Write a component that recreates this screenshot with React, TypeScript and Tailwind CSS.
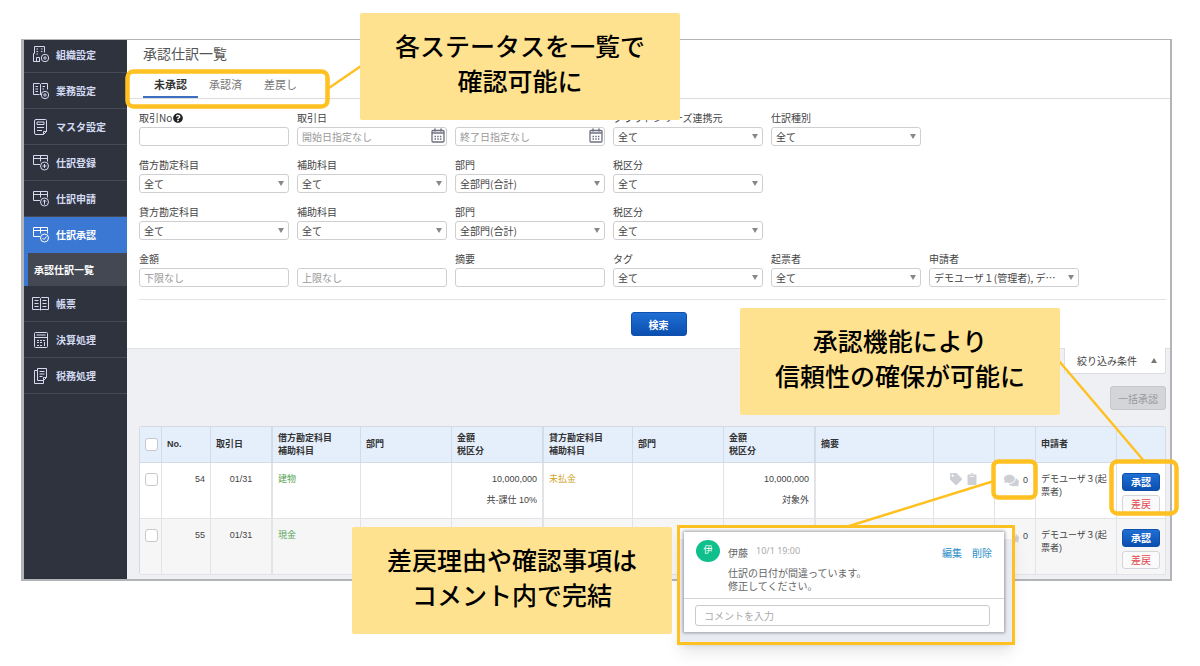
import type { ReactNode } from "react";
import { clsx } from "clsx";
import { FaClipboard, FaComments, FaQuestionCircle, FaTag } from "react-icons/fa";

const FONT = "font-['Noto_Sans_CJK_JP','Noto_Sans',sans-serif]";
const FIELD = "h-[19px] w-full rounded-[3px] border border-[#cfcfd2] bg-white px-1 py-0 text-[10px] leading-[17px] text-[#444]";

type IconName = "building" | "ledger" | "notebook" | "add" | "request" | "approve" | "book" | "calculator" | "documents";

const TABLE_SHAPE = <path d="M8 10.5H1.5v-9h14v6M1.5 4.5h14M8.5 1.5v6" />;
const BADGE_SHAPE = <circle cx="12.5" cy="12" r="4" />;
const GEAR_SHAPE = (
  <>
    <circle cx="13" cy="13" r="3.7" />
    <circle cx="13" cy="13" r="1.2" />
  </>
);

const ICONS: Record<IconName, ReactNode> = {
  building: (
    <>
      <path d="M8 16.5H1.5v-8h1v-7h10v6" />
      <path d="M4.500 4H6M9 4h1.500M4.500 6.500H6M9 6.500h1.500M4.500 9H6M4.500 16.500v-4h3v4" />
      {GEAR_SHAPE}
    </>
  ),
  ledger: (
    <>
      <path d="M8.5 13V2.500l-1-1h-6v11h6M8.500 2.500l1-1h6v6" />
      <path d="M3.500 4.500H6M3.500 7H6M3.500 9.500H6M10.500 4.500H13M10.500 7H12" />
      {GEAR_SHAPE}
    </>
  ),
  notebook: (
    <>
      <path d="M4 1.5h9.5a1 1 0 0 1 1 1v11l-3 3H4A1.5 1.5 0 0 1 2.5 15V3A1.5 1.5 0 0 1 4 1.5zM14.5 13.5h-3v3" />
      <path d="M5 4h7v2.500H5zM5 9.500h7M5 12.500h5" />
    </>
  ),
  add: (
    <>
      {TABLE_SHAPE}
      {BADGE_SHAPE}
      <path d="M12.5 10v4M10.5 12h4" />
    </>
  ),
  request: (
    <>
      {TABLE_SHAPE}
      {BADGE_SHAPE}
      <path d="M12.5 14.5V10M10.8 11.7l1.7-1.7 1.7 1.7" />
    </>
  ),
  approve: (
    <>
      {TABLE_SHAPE}
      {BADGE_SHAPE}
      <path d="M10.5 12l1.5 1.5 2.5-3" />
    </>
  ),
  book: (
    <>
      <path d="M8.5 15V3.5l-1-1h-7v12h7l1 .5 1-.5h7v-12h-7l-1 1" />
      <path d="M2.5 5.5h4M2.5 8.5h4M2.5 11.5h4M10.5 5.5h4M10.5 8.5h4M10.5 11.5h4" />
    </>
  ),
  calculator: (
    <>
      <rect x="2.5" y="1.5" width="13" height="15" rx="1" />
      <path d="M2.5 6.5h13M4.5 4h9" />
      <path d="M5 9.5h2M8 9.5h2M11 9.5h2M5 11.5h2M8 11.5h2M5 14.5h2M8 14.5h2M12.5 11v4" />
    </>
  ),
  documents: (
    <>
      <path d="M5.5 1.5h9v9l-3 3h-6zM14.5 10.5h-3v3" />
      <path d="M5.5 3.5h-3v13h9v-3M7.5 4.5h5M7.5 7h5M7.5 9.5h3" />
    </>
  ),
};

const MENU: { label: string; icon: IconName; active?: boolean }[] = [
  { label: "組織設定", icon: "building" },
  { label: "業務設定", icon: "ledger" },
  { label: "マスタ設定", icon: "notebook" },
  { label: "仕訳登録", icon: "add" },
  { label: "仕訳申請", icon: "request" },
  { label: "仕訳承認", icon: "approve", active: true },
  { label: "帳票", icon: "book" },
  { label: "決算処理", icon: "calculator" },
  { label: "税務処理", icon: "documents" },
];

function Sidebar() {
  return (
    <nav className="w-[103px] shrink-0 bg-[#2e333e] text-[10px] font-bold text-[#d3daf2]">
      {MENU.map((item, i) => (
        <div key={item.label}>
          <a
            href="#"
            className={clsx(
              "flex items-center gap-1.5 border-b pl-2",
              i === 0 ? "h-[33px] pb-1" : "h-9",
              item.active ? "border-[#3b78d3] bg-[#3b78d3] text-white" : "border-[#454a55]",
            )}
          >
            <svg viewBox="0 0 18 18" className="size-[18px] fill-none stroke-current" strokeWidth="1">
              {ICONS[item.icon]}
            </svg>
            {item.label}
          </a>
          {item.active ? (
            <a href="#" className="flex h-[33px] items-center border-l-4 border-[#3b78d3] bg-[#434853] pl-1.5 text-white">
              承認仕訳一覧
            </a>
          ) : null}
        </div>
      ))}
    </nav>
  );
}

function Tabs() {
  return (
    <div className="mt-2 flex h-[29px] border-b border-[#dcdcdf] pl-4 text-[11px] text-[#777]">
      {["未承認", "承認済", "差戻し"].map((tab, i) => (
        <button
          key={tab}
          type="button"
          className={clsx("w-[55px] border-b-2 pt-0.5", i === 0 ? "border-[#3c6fc0] font-bold text-[#333]" : "border-transparent")}
        >
          {tab}
        </button>
      ))}
    </div>
  );
}

function CalendarIcon() {
  return (
    <svg viewBox="0 0 14 15" className="pointer-events-none absolute top-px right-0.5 h-[15px] w-[14px] fill-none stroke-[#6c7080]">
      <rect x="1" y="2.5" width="12" height="11.5" rx="1" strokeWidth="1.3" />
      <path d="M1 5h12" strokeWidth="1.5" />
      <path d="M4 0.5v3M10 0.5v3" strokeWidth="1.5" />
      <path d="M3.5 8.5h7M3.5 11h7" strokeWidth="1.3" strokeDasharray="1.5 1.2" />
    </svg>
  );
}

type Field = {
  id: string;
  label?: string;
  name?: string;
  value?: string;
  placeholder?: string;
  calendar?: boolean;
  help?: boolean;
};

const FILTERS: Field[][] = [
  [
    { id: "no", label: "取引No", help: true },
    { id: "from", label: "取引日", placeholder: "開始日指定なし", calendar: true },
    { id: "to", name: "取引日の終了", placeholder: "終了日指定なし", calendar: true },
    { id: "source", label: "クラウドシリーズ連携元", value: "全て" },
    { id: "kind", label: "仕訳種別", value: "全て" },
  ],
  [
    { id: "debit", label: "借方勘定科目", value: "全て" },
    { id: "debit-sub", label: "補助科目", value: "全て" },
    { id: "debit-dept", label: "部門", value: "全部門(合計)" },
    { id: "debit-tax", label: "税区分", value: "全て" },
  ],
  [
    { id: "credit", label: "貸方勘定科目", value: "全て" },
    { id: "credit-sub", label: "補助科目", value: "全て" },
    { id: "credit-dept", label: "部門", value: "全部門(合計)" },
    { id: "credit-tax", label: "税区分", value: "全て" },
  ],
  [
    { id: "min", label: "金額", placeholder: "下限なし" },
    { id: "max", name: "金額の上限", placeholder: "上限なし" },
    { id: "memo", label: "摘要" },
    { id: "tag", label: "タグ", value: "全て" },
    { id: "author", label: "起票者", value: "全て" },
    { id: "applicant", label: "申請者", value: "デモユーザ１(管理者), デ…" },
  ],
];

function FilterField({ field }: { field: Field }) {
  return (
    <div className="w-[150px]">
      <label htmlFor={field.id} className="mb-0.5 flex h-3.5 items-center gap-px text-[10px] leading-[14px] whitespace-nowrap text-[#444]">
        {field.label}
        {field.help ? <FaQuestionCircle className="size-[10px] text-[#222]" /> : null}
      </label>
      <div className="relative">
        {field.value ? (
          <>
            <select id={field.id} className={clsx(FIELD, "block appearance-none")}>
              <option>{field.value}</option>
            </select>
            <svg viewBox="0 0 6 5" className="pointer-events-none absolute top-[7px] right-[5px] h-[5px] w-1.5 fill-[#888]">
              <path d="M0 0h6L3 5z" />
            </svg>
          </>
        ) : (
          <input
            id={field.id}
            type="text"
            aria-label={field.name}
            placeholder={field.placeholder}
            className={clsx(FIELD, "block placeholder:text-[#999]")}
          />
        )}
        {field.calendar ? <CalendarIcon /> : null}
      </div>
    </div>
  );
}

function Filters() {
  return (
    <form className="pt-3 pr-1 pb-3 pl-3">
      <div className="space-y-3">
        {FILTERS.map((row, i) => (
          <div key={i} className="flex gap-2">
            {row.map((field) => (
              <FilterField key={field.id} field={field} />
            ))}
          </div>
        ))}
      </div>
      <div className="mt-3 flex justify-center border-t border-[#e2e2e5] pt-3 pl-3">
        <button
          type="button"
          className="h-6 w-14 rounded-[3px] border border-[#0f50ad] bg-linear-to-b from-[#1f6fd4] to-[#0b4fb0] text-[10px] font-bold text-white"
        >
          検索
        </button>
      </div>
    </form>
  );
}

const TH = "h-9 border-b border-[#d3dce6] bg-[#e5effc] px-[5px] text-left align-middle font-bold text-[#333]";
const TD = "h-14 border-b border-[#e2e3e7] px-[5px] pt-2.5 align-top";
const THIN = "border-r";
const WIDE = "border-r-2";

const COLUMNS: { lines: string[]; width: string; wide?: boolean }[] = [
  { lines: ["No."], width: "w-[49px]" },
  { lines: ["取引日"], width: "w-[62px]", wide: true },
  { lines: ["借方勘定科目", "補助科目"], width: "w-[88px]" },
  { lines: ["部門"], width: "w-[91px]" },
  { lines: ["金額", "税区分"], width: "w-[92px]", wide: true },
  { lines: ["貸方勘定科目", "補助科目"], width: "w-[89px]" },
  { lines: ["部門"], width: "w-[91px]" },
  { lines: ["金額", "税区分"], width: "w-[92px]", wide: true },
  { lines: ["摘要"], width: "" },
  { lines: [], width: "w-[61px]" },
  { lines: [], width: "w-[41px]" },
  { lines: ["申請者"], width: "w-[81px]" },
  { lines: [], width: "w-[49px]" },
];

const ENTRIES = [
  { no: 54, date: "01/31", debit: "建物", debitAmount: "10,000,000", debitTax: "共-課仕 10%", credit: "未払金", creditAmount: "10,000,000", creditTax: "対象外" },
  { no: 55, date: "01/31", debit: "現金" },
];

function Check({ label }: { label: string }) {
  return (
    <input
      type="checkbox"
      aria-label={label}
      className="block size-[13px] appearance-none rounded-[3px] border border-[#c6c8cc] bg-white"
    />
  );
}

function Amount({ amount, tax }: { amount?: string; tax?: string }) {
  return (
    <td className={clsx(TD, WIDE, "text-right whitespace-nowrap")}>
      <p>{amount}</p>
      <p className="mt-2">{tax}</p>
    </td>
  );
}

function EntryTable() {
  return (
    <table className="w-full table-fixed border-separate border-spacing-0 rounded-[3px] border-t border-l border-[#d5dae2] font-['Liberation_Sans','Noto_Sans_CJK_JP',sans-serif] text-[9px] leading-[13px] text-[#444]">
      <thead>
        <tr>
          <th className={clsx(TH, THIN, "w-[22px] px-1")}>
            <Check label="全て選択" />
          </th>
          {COLUMNS.map((col, i) => (
            <th key={i} className={clsx(TH, col.width, col.wide ? WIDE : THIN)}>
              {col.lines.map((line) => (
                <p key={line} className="whitespace-nowrap">{line}</p>
              ))}
            </th>
          ))}
        </tr>
      </thead>
      <tbody>
        {ENTRIES.map((entry) => (
          <tr key={entry.no} className="bg-white even:bg-[#f6f6f7]">
            <td className={clsx(TD, THIN, "px-1")}>
              <Check label={`No.${entry.no}を選択`} />
            </td>
            <td className={clsx(TD, THIN, "text-right")}>{entry.no}</td>
            <td className={clsx(TD, WIDE, "text-center")}>{entry.date}</td>
            <td className={clsx(TD, THIN, "text-[#55a455]")}>{entry.debit}</td>
            <td className={clsx(TD, THIN)} />
            <Amount amount={entry.debitAmount} tax={entry.debitTax} />
            <td className={clsx(TD, THIN, "text-[#cfa526]")}>{entry.credit}</td>
            <td className={clsx(TD, THIN)} />
            <Amount amount={entry.creditAmount} tax={entry.creditTax} />
            <td className={clsx(TD, THIN)} />
            <td className={clsx(TD, THIN)}>
              <div className="flex items-center justify-center gap-1 text-[#cdcfd4]">
                <FaTag className="size-3" />
                <FaClipboard className="size-3" />
              </div>
            </td>
            <td className={clsx(TD, THIN)}>
              <div className="flex items-center justify-end gap-1">
                <FaComments className="size-[15px] text-[#cdcfd4]" />
                <span className="pr-0.5">0</span>
              </div>
            </td>
            <td className={clsx(TD, THIN)}>
              <p className="whitespace-nowrap">デモユーザ３(起</p>
              <p>票者)</p>
            </td>
            <td className={clsx(TD, THIN, "px-1")}>
              <div className="flex flex-col gap-1 font-['Noto_Sans_CJK_JP',sans-serif]">
                <button
                  type="button"
                  className="h-[18px] rounded-[3px] border border-[#0f50ad] bg-linear-to-b from-[#1f6fd4] to-[#0b4fb0] text-[10px] leading-[14px] font-bold text-white"
                >
                  承認
                </button>
                <button
                  type="button"
                  className="h-[18px] rounded-[3px] border border-[#d4d5d8] bg-[#fafafa] text-[10px] leading-[14px] text-[#e04a50]"
                >
                  差戻
                </button>
              </div>
            </td>
          </tr>
        ))}
      </tbody>
    </table>
  );
}

function CommentPopup() {
  return (
    <section className="absolute top-[525px] left-[677px] w-[338px] border-[3px] border-[#ffc021] bg-linear-to-b from-[#fafafb] from-10% to-[#e9ebf2] to-10% px-1 pt-1 pb-2.5 shadow-lg">
      <div className="w-[320px] bg-white text-[10px] leading-[13px] text-[#666] shadow-[0_0_3px_1px_rgba(0,0,0,0.35)]">
        <div className="flex gap-2 border-b border-[#d5d6d8] px-3 pt-2 pb-1.5">
          <span className="flex h-[22px] w-6 shrink-0 items-center justify-center rounded-[50%] bg-[#0fbf8c] pb-1 text-[9px] text-white">伊</span>
          <div className="flex-1">
            <div className="flex h-6 items-center">
              <span>伊藤</span>
              <time className="ml-2 pb-1 font-['Noto_Sans',sans-serif] text-[9px] text-[#aaa]">10/1 19:00</time>
              <span className="ml-auto flex gap-2.5 text-[#2a8dc5]">
                <a href="#">編集</a>
                <a href="#">削除</a>
              </span>
            </div>
            <p className="mt-0.5">仕訳の日付が間違っています。</p>
            <p>修正してください。</p>
          </div>
        </div>
        <div className="py-1.5 pr-3.5 pl-[11px]">
          <input
            type="text"
            aria-label="コメント"
            placeholder="コメントを入力"
            className="block h-[21px] w-full rounded-[3px] border border-[#c9cacd] px-2 text-[10px] placeholder:text-[#aaa]"
          />
        </div>
      </div>
    </section>
  );
}

function Callout({ lines, place }: { lines: [string, string]; place: string }) {
  return (
    <div
      className={clsx(
        "absolute flex h-[107px] w-[320px] flex-col justify-center rounded-[2px] bg-[#ffe28f] pb-2 text-center text-[25px] leading-[35px] font-medium text-black",
        place,
      )}
    >
      <p>{lines[0]}</p>
      <p>{lines[1]}</p>
    </div>
  );
}

// Frames around the highlighted controls and the lines that lead to their notes.
function Annotations() {
  return (
    <svg viewBox="0 0 1200 666" className="pointer-events-none absolute top-0 left-0 h-[666px] w-[1200px] fill-none stroke-[#ffc021]">
      <g strokeWidth="4.5">
        <rect x="127.5" y="71.5" width="200" height="35" rx="6" />
        <rect x="993.5" y="461.5" width="42" height="36" rx="5" />
        <rect x="1111.500" y="461.5" width="65" height="52" rx="6" />
      </g>
      <path d="M329 88L361 66M1059 361L1144 461M846 527L994 481" strokeWidth="2.5" />
    </svg>
  );
}

export default function App() {
  return (
    <div className={clsx("relative min-h-screen bg-white pt-[39px] pr-7 pb-[86px] pl-[21px]", FONT)}>
      <div className="flex border-t border-r-2 border-b-2 border-l-[3px] border-[#b3b4b8] bg-[#eff0f4]">
        <Sidebar />
        <main className="min-w-0 flex-1">
          <div className="border-b border-[#dfe0e5] bg-white pt-1">
            <h1 className="pl-4 text-[14px] leading-[18px] text-[#555]">承認仕訳一覧</h1>
            <Tabs />
            <Filters />
          </div>
          <div className="flex flex-col items-end pr-1 pb-1 pl-3">
            <button
              type="button"
              className="-mt-px flex h-[26px] w-[102px] items-center justify-end gap-3.5 rounded-b-[3px] border-x border-b border-[#dcdde2] bg-white pr-2 text-[10px] text-[#444]"
            >
              絞り込み条件
              <svg viewBox="0 0 6 5" className="h-[5px] w-1.5 fill-[#777]">
                <path d="M0 5h6L3 0z" />
              </svg>
            </button>
            <button type="button" disabled className="mt-3 h-6 w-14 rounded-[3px] border border-[#c5c7cb] bg-[#d4d5d9] text-[10px] text-[#999]">
              一括承認
            </button>
            <div className="mt-4 w-full">
              <EntryTable />
            </div>
          </div>
        </main>
      </div>

      <CommentPopup />
      <Annotations />
      <Callout place="top-[13px] left-[360px]" lines={["各ステータスを一覧で", "確認可能に"]} />
      <Callout place="top-[308px] left-[740px]" lines={["承認機能により", "信頼性の確保が可能に"]} />
      <Callout place="top-[527px] left-[352px]" lines={["差戻理由や確認事項は", "コメント内で完結"]} />
    </div>
  );
}
